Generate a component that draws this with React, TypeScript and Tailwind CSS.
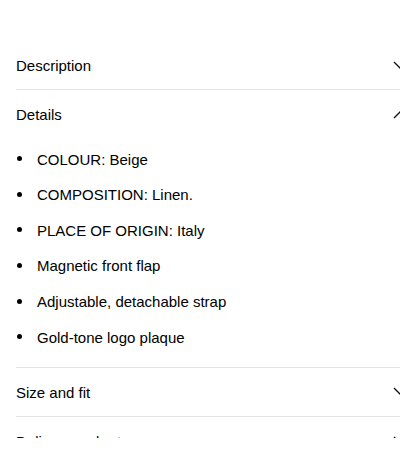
import React from 'react';

const details = [
  'COLOUR: Beige',
  'COMPOSITION: Linen.',
  'PLACE OF ORIGIN: Italy',
  'Magnetic front flap',
  'Adjustable, detachable strap',
  'Gold-tone logo plaque',
];

function Chevron({ up }: { up?: boolean }) {
  return (
    <svg width="16" height="9" viewBox="0 0 16 9" fill="none" className="shrink-0">
      {up ? (
        <path d="M1 8 L8 1 L15 8" stroke="#111" strokeWidth="1.3" />
      ) : (
        <path d="M1 1 L8 8 L15 1" stroke="#111" strokeWidth="1.3" />
      )}
    </svg>
  );
}

function Row({ title, open }: { title: string; open?: boolean }) {
  return (
    <div className="flex h-[48px] items-center justify-between pr-[8px]">
      <span className="pt-[3px]">{title}</span>
      <Chevron up={open} />
    </div>
  );
}

export default function App() {
  return (
    <div className="w-[400px] h-[474px] overflow-hidden bg-white">
      <div
        className="h-[438px] overflow-hidden pt-[41px] text-[15px] text-black"
        style={{ fontFamily: '"Liberation Sans", Arial, sans-serif' }}
      >
        <div className="ml-4 w-[401px]">
          <div className="border-b border-[#e3e3e3]">
            <Row title="Description" />
          </div>
          <div className="border-b border-[#e3e3e3]">
            <Row title="Details" open />
            <ul className="pt-[3px] pb-[12px]">
              {details.map((d) => (
                <li key={d} className="flex h-[35.6px] items-center">
                  <span className="ml-[1px] mr-[15px] h-[5px] w-[5px] rounded-full bg-black" />
                  <span className="pt-[2px]">{d}</span>
                </li>
              ))}
            </ul>
          </div>
          <div className="border-b border-[#e3e3e3]">
            <Row title="Size and fit" />
          </div>
          <div>
            <Row title="Delivery and returns" />
          </div>
        </div>
      </div>
    </div>
  );
}
